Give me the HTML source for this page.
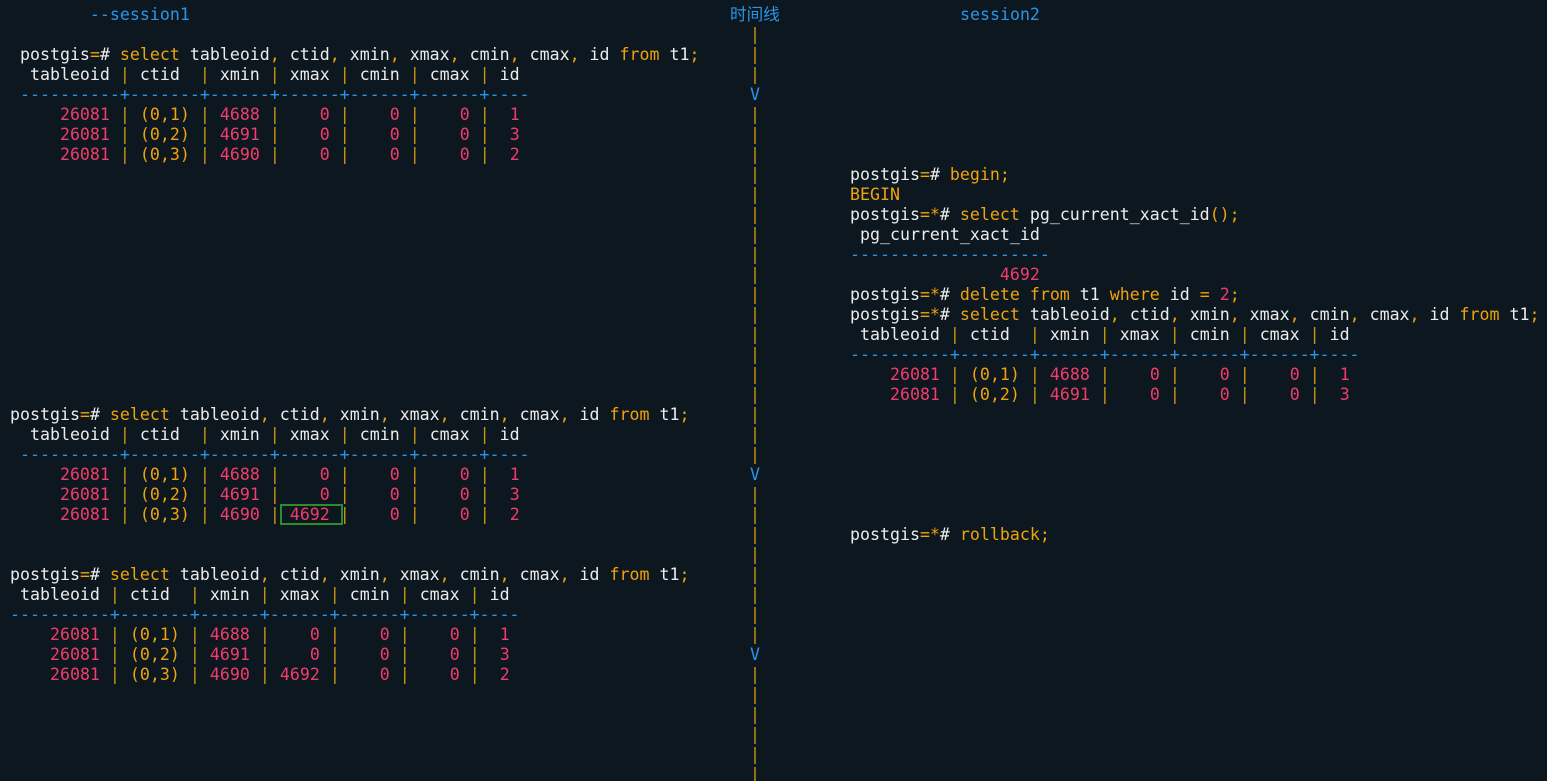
<!DOCTYPE html>
<html><head><meta charset="utf-8"><style>
html,body{margin:0;padding:0;background:#0c171f;width:1547px;height:781px;overflow:hidden}
#wrap{position:relative;width:1547px;height:781px;overflow:hidden}
pre{position:absolute;margin:0;font-family:"DejaVu Sans Mono","Liberation Mono","Noto Sans CJK SC",monospace;font-size:16.6px;line-height:20px;color:#ececec;white-space:pre}
i{font-style:normal;color:#f0a30a}
b{font-weight:normal;color:#f23c6c}
u{text-decoration:none;color:#2a95e8}
s{text-decoration:none;color:#c8980c}
.box{position:absolute;left:280px;top:504px;width:59px;height:17px;border:2px solid #2e8b2e}
</style></head><body><div id="wrap">
<pre style="left:10px;top:5px"><u>        --session1</u>

 postgis<i>=</i># <i>select</i> tableoid<i>,</i> ctid<i>,</i> xmin<i>,</i> xmax<i>,</i> cmin<i>,</i> cmax<i>,</i> id <i>from</i> t1<i>;</i>
  tableoid <s>|</s> ctid  <s>|</s> xmin <s>|</s> xmax <s>|</s> cmin <s>|</s> cmax <s>|</s> id
<u> ----------+-------+------+------+------+------+----</u>
     <b>26081</b> <s>|</s> <i>(0,1)</i> <s>|</s> <b>4688</b> <s>|</s>    <b>0</b> <s>|</s>    <b>0</b> <s>|</s>    <b>0</b> <s>|</s>  <b>1</b>
     <b>26081</b> <s>|</s> <i>(0,2)</i> <s>|</s> <b>4691</b> <s>|</s>    <b>0</b> <s>|</s>    <b>0</b> <s>|</s>    <b>0</b> <s>|</s>  <b>3</b>
     <b>26081</b> <s>|</s> <i>(0,3)</i> <s>|</s> <b>4690</b> <s>|</s>    <b>0</b> <s>|</s>    <b>0</b> <s>|</s>    <b>0</b> <s>|</s>  <b>2</b>












postgis<i>=</i># <i>select</i> tableoid<i>,</i> ctid<i>,</i> xmin<i>,</i> xmax<i>,</i> cmin<i>,</i> cmax<i>,</i> id <i>from</i> t1<i>;</i>
  tableoid <s>|</s> ctid  <s>|</s> xmin <s>|</s> xmax <s>|</s> cmin <s>|</s> cmax <s>|</s> id
<u> ----------+-------+------+------+------+------+----</u>
     <b>26081</b> <s>|</s> <i>(0,1)</i> <s>|</s> <b>4688</b> <s>|</s>    <b>0</b> <s>|</s>    <b>0</b> <s>|</s>    <b>0</b> <s>|</s>  <b>1</b>
     <b>26081</b> <s>|</s> <i>(0,2)</i> <s>|</s> <b>4691</b> <s>|</s>    <b>0</b> <s>|</s>    <b>0</b> <s>|</s>    <b>0</b> <s>|</s>  <b>3</b>
     <b>26081</b> <s>|</s> <i>(0,3)</i> <s>|</s> <b>4690</b> <s>|</s> <b>4692</b> <s>|</s>    <b>0</b> <s>|</s>    <b>0</b> <s>|</s>  <b>2</b>


postgis<i>=</i># <i>select</i> tableoid<i>,</i> ctid<i>,</i> xmin<i>,</i> xmax<i>,</i> cmin<i>,</i> cmax<i>,</i> id <i>from</i> t1<i>;</i>
 tableoid <s>|</s> ctid  <s>|</s> xmin <s>|</s> xmax <s>|</s> cmin <s>|</s> cmax <s>|</s> id
<u>----------+-------+------+------+------+------+----</u>
    <b>26081</b> <s>|</s> <i>(0,1)</i> <s>|</s> <b>4688</b> <s>|</s>    <b>0</b> <s>|</s>    <b>0</b> <s>|</s>    <b>0</b> <s>|</s>  <b>1</b>
    <b>26081</b> <s>|</s> <i>(0,2)</i> <s>|</s> <b>4691</b> <s>|</s>    <b>0</b> <s>|</s>    <b>0</b> <s>|</s>    <b>0</b> <s>|</s>  <b>3</b>
    <b>26081</b> <s>|</s> <i>(0,3)</i> <s>|</s> <b>4690</b> <s>|</s> <b>4692</b> <s>|</s>    <b>0</b> <s>|</s>    <b>0</b> <s>|</s>  <b>2</b></pre>
<div class="box"></div>
<pre style="left:730px;top:5px"><u>时间线</u></pre>
<pre style="left:750px;top:25px"><s>|
|
|</s>
<u>V</u>
<s>|
|
|
|
|
|
|
|
|
|
|
|
|
|
|
|
|
|</s>
<u>V</u>
<s>|
|
|
|
|
|
|
|</s>
<u>V</u>
<s>|
|
|
|
|
|
|</s></pre>
<pre style="left:850px;top:165px">postgis<i>=</i># <i>begin;</i>
<i>BEGIN</i>
postgis<i>=*</i># <i>select</i> pg_current_xact_id<i>();</i>
 pg_current_xact_id
<u>--------------------</u>
               <b>4692</b>
postgis<i>=*</i># <i>delete from</i> t1 <i>where</i> id <i>=</i> <b>2</b><i>;</i>
postgis<i>=*</i># <i>select</i> tableoid<i>,</i> ctid<i>,</i> xmin<i>,</i> xmax<i>,</i> cmin<i>,</i> cmax<i>,</i> id <i>from</i> t1<i>;</i>
 tableoid <s>|</s> ctid  <s>|</s> xmin <s>|</s> xmax <s>|</s> cmin <s>|</s> cmax <s>|</s> id
<u>----------+-------+------+------+------+------+----</u>
    <b>26081</b> <s>|</s> <i>(0,1)</i> <s>|</s> <b>4688</b> <s>|</s>    <b>0</b> <s>|</s>    <b>0</b> <s>|</s>    <b>0</b> <s>|</s>  <b>1</b>
    <b>26081</b> <s>|</s> <i>(0,2)</i> <s>|</s> <b>4691</b> <s>|</s>    <b>0</b> <s>|</s>    <b>0</b> <s>|</s>    <b>0</b> <s>|</s>  <b>3</b>






postgis<i>=*</i># <i>rollback;</i></pre>
<pre style="left:960px;top:5px"><u>session2</u></pre>
</div></body></html>
